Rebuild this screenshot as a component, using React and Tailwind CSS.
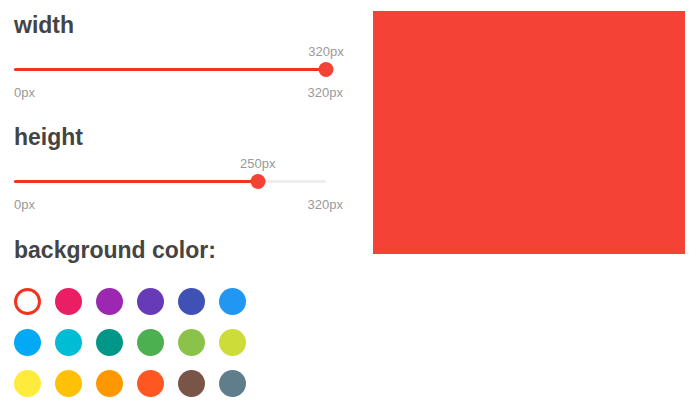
import React from "react";

const COLORS = [
  "#F44336", "#E91E63", "#9C27B0", "#673AB7", "#3F51B5", "#2196F3",
  "#03A9F4", "#00BCD4", "#009688", "#4CAF50", "#8BC34A", "#CDDC39",
  "#FFEB3B", "#FFC107", "#FF9800", "#FF5722", "#795548", "#607D8B",
];

const TRACK = 312;

function Slider({ title, value, max = 320, className = "" }) {
  const pos = (value / max) * TRACK;
  return (
    <div className={className}>
      <div className="h-[26px] text-[23px] leading-[26px] font-bold text-[#444]">{title}</div>
      <div className="relative mt-[6px] h-[16px]">
        <span
          className="absolute top-0 -translate-x-1/2 text-[13px] leading-[16px] text-[#999]"
          style={{ left: pos }}
        >
          {value}px
        </span>
      </div>
      <div className="relative mt-[1px] h-[16px] w-[312px]">
        <div className="absolute left-0 right-0 top-[6.5px] h-[3px] rounded-full bg-[#eeeeee]" />
        <div
          className="absolute left-0 top-[6.5px] h-[3px] rounded-full bg-[#f0321f]"
          style={{ width: pos }}
        />
        <div
          className="absolute top-[0.5px] h-[15px] w-[15px] -translate-x-1/2 rounded-full bg-[#f44336]"
          style={{ left: pos }}
        />
      </div>
      <div className="mt-[8px] flex h-[16px] justify-between text-[13px] leading-[16px] text-[#999]">
        <span>0px</span>
        <span>{max}px</span>
      </div>
    </div>
  );
}

export default function App() {
  return (
    <div
      className="flex h-[411px] w-[700px] items-start bg-white pl-[14px] pt-[11px]"
      style={{ fontFamily: '"Liberation Sans", Arial, sans-serif' }}
    >
      <div className="w-[329px] pt-[1px]">
        <Slider title="width" value={320} />
        <Slider title="height" value={250} className="mt-[23px]" />
        <div className="mt-[24px] h-[26px] text-[23px] leading-[26px] font-bold text-[#444]">
          background color:
        </div>
        <div className="mt-[25px] grid w-[232px] grid-cols-6 gap-[14px]">
          {COLORS.map((c, i) =>
            i === 0 ? (
              <div key={c} className="h-[27px] w-[27px] rounded-full border-[3px] border-[#f4331f] bg-white" />
            ) : (
              <div key={c} className="h-[27px] w-[27px] rounded-full" style={{ backgroundColor: c }} />
            )
          )}
        </div>
      </div>
      <div className="ml-[30px] h-[243px] w-[312px] bg-[#f44336]" />
    </div>
  );
}
